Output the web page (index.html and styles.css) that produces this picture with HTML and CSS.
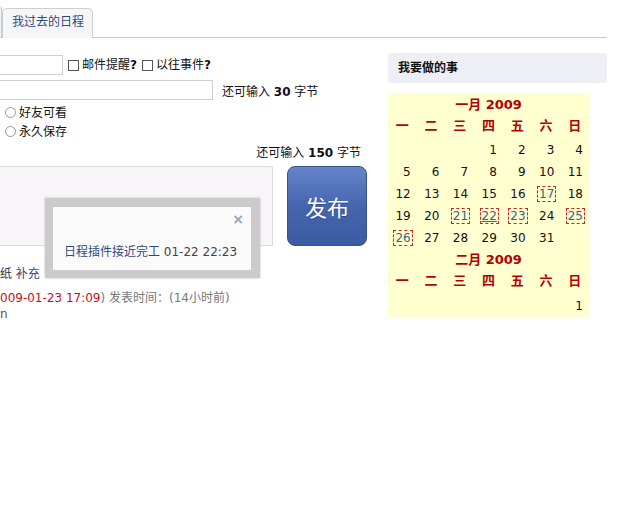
FILE: index.html
```html
<!DOCTYPE html>
<html lang="zh">
<head>
<meta charset="utf-8">
<link rel="stylesheet" href="styles.css">
</head>
<body>
<div class="page">
  <div class="tabs">
    <span class="tab-prev"></span>
    <a class="tab">我过去的日程</a>
  </div>
  <div class="cols">
    <div class="main">
      <div class="row row1">
        <input class="txt txt-short" type="text">
        <label class="chk"><input type="checkbox"> 邮件提醒<b>?</b></label>
        <label class="chk"><input type="checkbox"> 以往事件<b>?</b></label>
      </div>
      <div class="row row2">
        <input class="txt txt-long" type="text">
        <span class="remain">还可输入 <b>30</b> 字节</span>
      </div>
      <label class="radio-row"><input type="radio" name="p"> 好友可看</label>
      <label class="radio-row"><input type="radio" name="p"> 永久保存</label>
      <div class="remain-right">还可输入 <b>150</b> 字节</div>
      <div class="post-row">
        <textarea class="area"></textarea>
        <button class="publish">发布</button>
      </div>
      <div class="line line-a"><span class="dark">纸</span> <a class="link">补充</a></div>
      <div class="line line-b"><span class="red">009-01-23 17:09</span>) 发表时间：(14小时前)</div>
      <div class="line line-c">n</div>
      <div class="popup">
        <div class="popup-inner">
          <span class="close">×</span>
          <div class="popup-text"><a class="link">日程插件接近完工</a> 01-22 22:23</div>
        </div>
      </div>
    </div>
    <div class="side">
      <div class="side-head">我要做的事</div>
      <div class="cal">
        <div class="month">一月 2009</div>
        <div class="grid">
          <span class="wd">一</span><span class="wd">二</span><span class="wd">三</span><span class="wd">四</span><span class="wd">五</span><span class="wd">六</span><span class="wd">日</span>
          <span></span><span></span><span></span><span class="d">1</span><span class="d">2</span><span class="d">3</span><span class="d">4</span>
          <span class="d">5</span><span class="d">6</span><span class="d">7</span><span class="d">8</span><span class="d">9</span><span class="d">10</span><span class="d">11</span>
          <span class="d">12</span><span class="d">13</span><span class="d">14</span><span class="d">15</span><span class="d">16</span><span class="d"><i class="ev">17</i></span><span class="d">18</span>
          <span class="d">19</span><span class="d">20</span><span class="d"><i class="ev">21</i></span><span class="d"><i class="ev today">22</i></span><span class="d"><i class="ev">23</i></span><span class="d">24</span><span class="d"><i class="ev">25</i></span>
          <span class="d"><i class="ev">26</i></span><span class="d">27</span><span class="d">28</span><span class="d">29</span><span class="d">30</span><span class="d">31</span><span></span>
        </div>
        <div class="month month2">二月 2009</div>
        <div class="grid">
          <span class="wd">一</span><span class="wd">二</span><span class="wd">三</span><span class="wd">四</span><span class="wd">五</span><span class="wd">六</span><span class="wd">日</span>
          <span></span><span></span><span></span><span></span><span></span><span></span><span class="d last">1</span>
        </div>
      </div>
    </div>
  </div>
</div>
</body>
</html>
```
FILE: styles.css
```css
* { box-sizing: border-box; }
html, body { margin: 0; padding: 0; background: #fff; }
body {
  font-family: "DejaVu Sans", "Noto Sans CJK SC", sans-serif;
  font-size: 12px;
  line-height: 14px;
  color: #222;
}
.page { width: 640px; height: 512px; overflow: hidden; }

.tabs {
  display: flex;
  align-items: flex-end;
  height: 38px;
  width: 607px;
  border-bottom: 1px solid #c8c8c8;
}
.tab-prev {
  width: 2px; height: 30px;
  border-right: 1px solid #c8c8c8;
  background: #f3f4f6;
}
.tab {
  display: block;
  width: 91px; height: 30px;
  margin-bottom: -1px;
  border: 1px solid #cfcfcf;
  border-bottom: none;
  border-radius: 5px 5px 0 0;
  background: #f4f6f9;
  color: #2c4a7e;
  padding: 6px 0 0 9px;
  font-size: 12px;
  line-height: 14px;
}

.cols { display: flex; }
.main {
  position: relative;
  width: 375px;
  height: 474px;
  overflow: hidden;
}
.row { display: flex; align-items: center; height: 20px; }
.row1 { margin-top: 17px; }
.row2 { margin-top: 5px; }
.txt {
  height: 20px;
  border: 1px solid #cfcfcf;
  background: #fff;
  margin: 0 0 0 -20px;
  padding: 0;
}
.txt-short { width: 83px; }
.txt-long { width: 233px; }
.chk { display: flex; align-items: center; margin-left: 5px; color: #111; }
.chk + .chk { margin-left: 5px; }
.chk input, .radio-row input {
  -webkit-appearance: none;
  appearance: none;
  margin: 0 3px 0 0;
  width: 11px; height: 11px;
  border: 1px solid #555;
  background: #fff;
}
.chk b { font-weight: bold; }
.remain { margin-left: 9px; margin-top: 4px; color: #111; }

.radio-row {
  display: flex;
  align-items: center;
  padding-left: 5px;
  height: 19px;
  color: #111;
}
.radio-row:first-of-type { margin-top: 3px; }
.radio-row input {
  border-radius: 50%;
  border-color: #9a9a9a;
  margin-right: 3px;
}
.remain-right {
  text-align: right;
  padding-right: 14px;
  margin-top: 5px;
  color: #111;
}

.post-row { display: flex; margin-top: 6px; height: 80px; }
.area {
  width: 293px; height: 80px;
  margin: 0 0 0 -20px;
  border: 1px solid #dcdcdc;
  background: #f8f5f8;
  resize: none;
}
.publish {
  width: 80px; height: 80px;
  margin-left: 14px;
  border: 1px solid #36528c;
  border-radius: 8px;
  background: linear-gradient(#6584c9, #4566ae 50%, #3a5aa1);
  color: #fff;
  font-family: "Noto Sans CJK SC", sans-serif;
  font-size: 22px;
  text-shadow: 0 1px 1px rgba(0,0,0,0.3);
  padding: 0;
}

.line { height: 16px; line-height: 16px; white-space: nowrap; }
.line-a { margin-top: 20px; }
.line-b { margin-top: 8px; color: #777; }
.line-c { margin-top: 0; color: #555; }
.dark { color: #333; }
.link { color: #2c4a7e; text-decoration: none; }
.red { color: #c8101a; }

.popup {
  position: absolute;
  left: 45px; top: 160px;
  width: 215px; height: 80px;
  background: #cbcbcb;
  padding: 9px 9px 8px 8px;
  box-shadow: 0 0 2px #bbb;
}
.popup-inner {
  position: relative;
  width: 100%; height: 100%;
  background: #fbfbfc;
}
.close {
  position: absolute;
  right: 7px; top: 5px;
  color: #9aa3b5;
  font-size: 14px;
  font-weight: bold;
}
.popup-text {
  position: absolute;
  left: 11px; top: 38px;
  color: #444;
  white-space: nowrap;
}

.side { margin-left: 13px; width: 219px; }
.side-head {
  margin-top: 15px;
  height: 30px;
  background: #eeeff5;
  border-radius: 3px;
  padding: 8px 0 0 10px;
  font-weight: bold;
  color: #111;
}
.cal {
  margin-top: 10px;
  width: 201px;
  height: 225px;
  background: #ffffcf;
  padding-top: 4px;
}
.month {
  text-align: center;
  color: #b40000;
  font-weight: bold;
  font-size: 13px;
  height: 22px;
  line-height: 16px;
}
.month2 { margin-top: 1px; }
.grid {
  display: grid;
  grid-template-columns: repeat(7, 1fr);
  grid-auto-rows: 22px;
}
.wd {
  text-align: center;
  color: #b40000;
  font-weight: bold;
  font-size: 13px;
  line-height: 14px;
}
.d {
  text-align: right;
  padding-right: 6px;
  padding-top: 2px;
  line-height: 14px;
  color: #111;
}
.d.last { padding-top: 3px; }
.ev {
  font-style: normal;
  color: #3c5e88;
  border: 1px dashed #c0282a;
  padding: 0 1px;
  margin-right: -2px;
}
.ev.today { text-decoration: underline; }
```
